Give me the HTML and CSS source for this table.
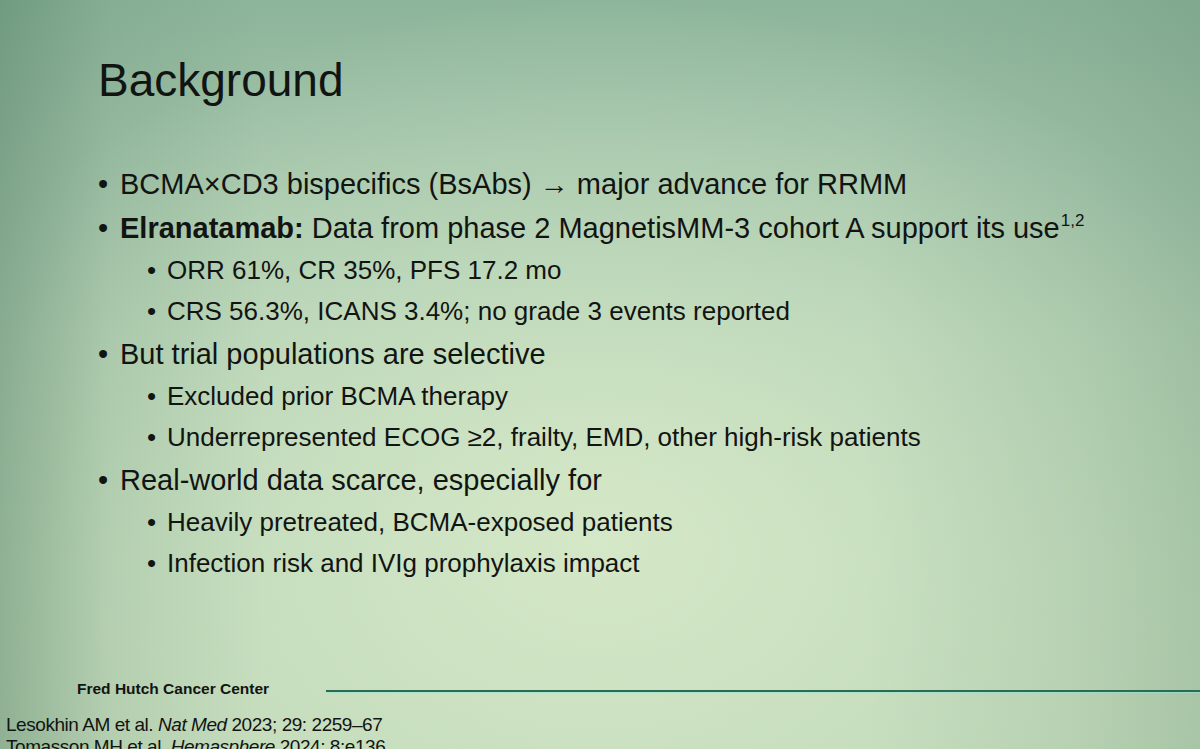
FILE: index.html
```html
<!DOCTYPE html>
<html lang="en">
<head>
<meta charset="utf-8">
<title>Background</title>
<link rel="stylesheet" href="styles.css">
</head>
<body>
<div class="slide">
  <h1 class="title">Background</h1>
  <ul class="bullets">
    <li class="main"><span class="txt">BCMA×CD3 bispecifics (BsAbs) → major advance for RRMM</span></li>
    <li class="main"><span class="txt"><b>Elranatamab:</b> Data from phase 2 MagnetisMM-3 cohort A support its use<sup class="ref">1,2</sup></span>
      <ul class="sub">
        <li>ORR 61%, CR 35%, PFS 17.2 mo</li>
        <li>CRS 56.3%, ICANS 3.4%; no grade 3 events reported</li>
      </ul>
    </li>
    <li class="main"><span class="txt">But trial populations are selective</span>
      <ul class="sub">
        <li>Excluded prior BCMA therapy</li>
        <li>Underrepresented ECOG ≥2, frailty, EMD, other high-risk patients</li>
      </ul>
    </li>
    <li class="main"><span class="txt">Real-world data scarce, especially for</span>
      <ul class="sub">
        <li>Heavily pretreated, BCMA-exposed patients</li>
        <li>Infection risk and IVIg prophylaxis impact</li>
      </ul>
    </li>
  </ul>
  <footer class="footer">
    <div class="footer-row">
      <span class="org">Fred Hutch Cancer Center</span>
      <span class="rule"></span>
    </div>
    <div class="refs">
      <p>Lesokhin AM et al. <i>Nat Med</i> 2023; 29: 2259–67</p>
      <p>Tomasson MH et al. <i>Hemasphere</i> 2024; 8:e136</p>
    </div>
  </footer>
</div>
</body>
</html>
```
FILE: styles.css
```css
html, body {
  margin: 0;
  padding: 0;
}
body {
  width: 1200px;
  height: 749px;
  overflow: hidden;
  font-family: "Liberation Sans", Arial, sans-serif;
  color: #121412;
}
.slide {
  width: 1200px;
  height: 749px;
  box-sizing: border-box;
  padding-top: 54px;
  display: flex;
  flex-direction: column;
  overflow: hidden;
  background:
    linear-gradient(to right, rgba(70,115,90,0.40) 0%, rgba(70,115,90,0.12) 9%, rgba(70,115,90,0) 22%, rgba(70,115,90,0) 72%, rgba(70,115,90,0.10) 90%, rgba(70,115,90,0.20) 100%),
    radial-gradient(ellipse 62% 72% at 50% 72%, rgba(214,233,200,0.95) 0%, rgba(208,229,198,0.5) 50%, rgba(208,229,198,0) 100%),
    linear-gradient(to bottom, #8db59b 0%, #9dc0a6 18%, #b1cfb2 45%, #bcd7b7 75%, #bfd8b8 100%);
}
.title {
  margin: 0 0 0 98px;
  font-size: 46px;
  line-height: 52px;
  font-weight: normal;
}
.bullets {
  list-style: none;
  margin: 56px 0 0 98px;
  padding: 0;
}
.main {
  font-size: 29px;
  line-height: 44px;
}
.main::before {
  content: "•";
  float: left;
  width: 22px;
}
.main > .txt {
  display: block;
}
.ref {
  font-size: 17px;
  line-height: 0;
  vertical-align: 12px;
  margin-left: 1px;
}
.sub {
  list-style: none;
  margin: 0;
  padding: 0 0 0 49px;
}
.sub li {
  font-size: 26px;
  line-height: 41px;
}
.sub li::before {
  content: "•";
  display: inline-block;
  width: 20px;
}
.footer {
  margin-top: 95px;
}
.footer-row {
  display: flex;
  align-items: center;
  padding-left: 77px;
}
.org {
  font-size: 15.5px;
  line-height: 20px;
  font-weight: bold;
  white-space: nowrap;
}
.rule {
  flex: 1;
  height: 2px;
  margin-left: 57px;
  margin-top: 3px;
  background: #2c6a58;
  box-shadow: 0 1px 0 rgba(150,230,200,0.6);
}
.refs {
  margin-top: 15px;
  padding-left: 6px;
}
.refs p {
  margin: 0;
  font-size: 19px;
  line-height: 22px;
  letter-spacing: -0.45px;
  white-space: nowrap;
}
```
